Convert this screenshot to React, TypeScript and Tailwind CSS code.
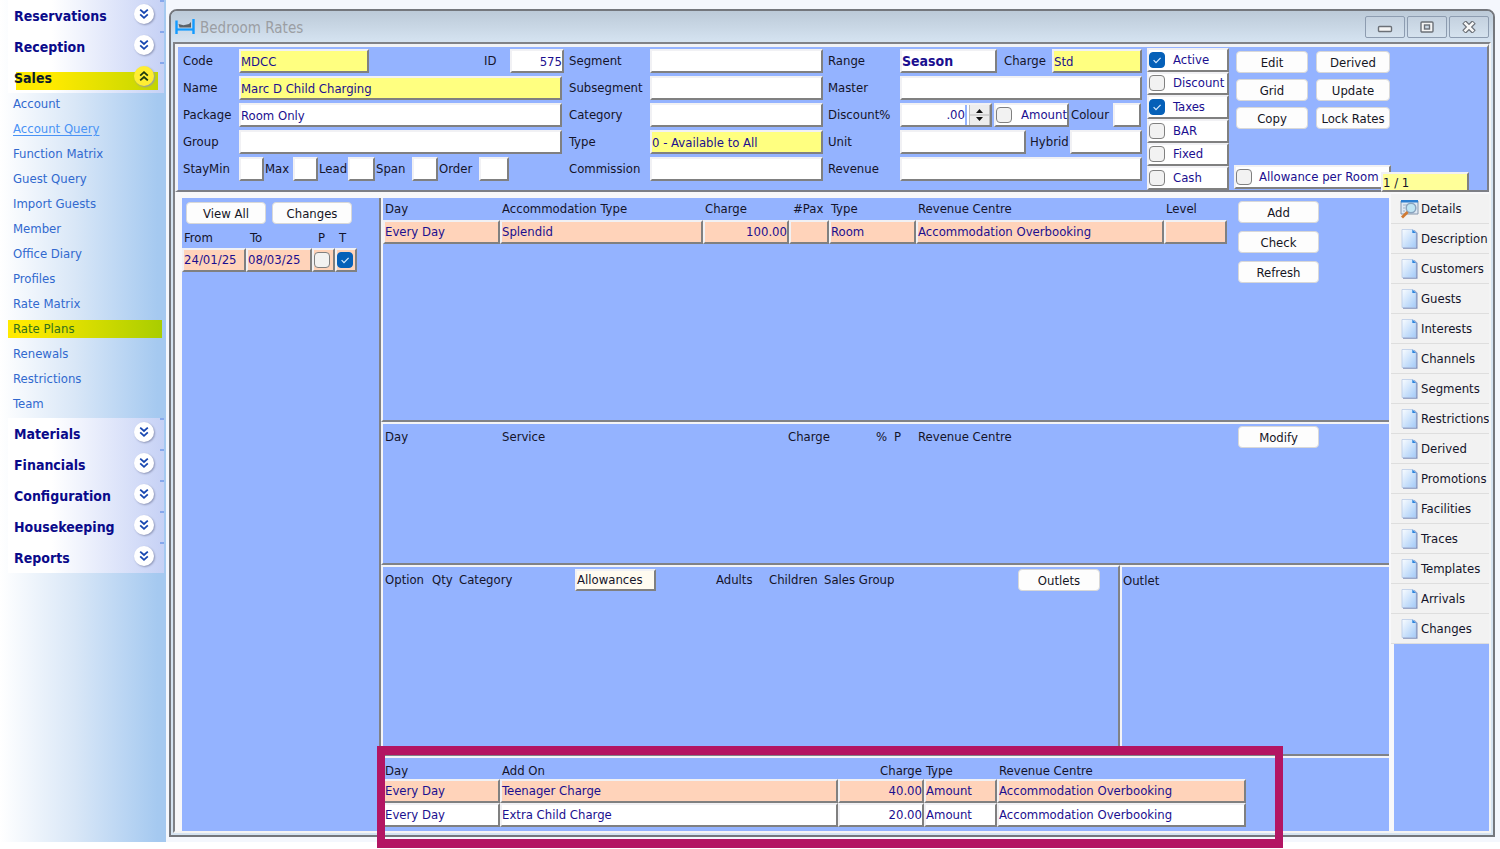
import type { ReactNode } from 'react';
import clsx from 'clsx';

const BEVEL =
  'border-t-2 border-l-2 border-r-2 border-b-2 border-t-[#f1f1f4] border-l-[#f1f1f4] border-r-[#808080] border-b-[#808080]';

const menuTop = ['Reservations', 'Reception'];
const menuBottom = ['Materials', 'Financials', 'Configuration', 'Housekeeping', 'Reports'];
const salesLinks = [
  'Account',
  'Account Query',
  'Function Matrix',
  'Guest Query',
  'Import Guests',
  'Member',
  'Office Diary',
  'Profiles',
  'Rate Matrix',
  'Rate Plans',
  'Renewals',
  'Restrictions',
  'Team',
];
const tabs = [
  'Details',
  'Description',
  'Customers',
  'Guests',
  'Interests',
  'Channels',
  'Segments',
  'Restrictions',
  'Derived',
  'Promotions',
  'Facilities',
  'Traces',
  'Templates',
  'Arrivals',
  'Changes',
];
const flags = [
  { label: 'Active', checked: true },
  { label: 'Discount', checked: false },
  { label: 'Taxes', checked: true },
  { label: 'BAR', checked: false },
  { label: 'Fixed', checked: false },
  { label: 'Cash', checked: false },
];
const addOns = [
  { day: 'Every Day', name: 'Teenager Charge', charge: '40.00', type: 'Amount', centre: 'Accommodation Overbooking' },
  { day: 'Every Day', name: 'Extra Child Charge', charge: '20.00', type: 'Amount', centre: 'Accommodation Overbooking' },
];

function Chevrons({ up = false }: { up?: boolean }) {
  return (
    <span
      className={clsx(
        'flex size-5 items-center justify-center rounded-full shadow-[1px_1px_2px_#8f97b8]',
        up ? 'bg-[#ffee33]' : 'bg-white',
      )}
    >
      <svg
        viewBox="0 0 12 12"
        className={clsx('size-3', up && 'rotate-180')}
        fill="none"
        stroke={up ? '#1c3a10' : '#1746b0'}
        strokeWidth="1.8"
      >
        <path d="M2.2 1.6 6 5l3.800-3.400M2.2 6.4 6 9.800l3.800-3.400" />
      </svg>
    </span>
  );
}

function MenuHeader({ label, open = false }: { label: string; open?: boolean }) {
  return (
    <button
      type="button"
      className="relative flex h-[31px] w-full items-center justify-between bg-linear-to-r from-white from-28% to-[#c6d1f5] pr-2.5 pl-1.5 text-left text-sm font-bold text-[#0a0a8a]"
    >
      {open && (
        <span className="absolute right-1.5 left-2 top-2.5 h-[18px] bg-linear-to-r from-[#ffea00] from-25% to-[#c3d600]" />
      )}
      <span className={clsx('relative', open && 'text-[#0b1a2c]')}>{label}</span>
      <span className="relative -mt-1">
        <Chevrons up={open} />
      </span>
      <span className="absolute top-0 right-0 h-0.5 w-1 bg-[#86a8ec]" />
    </button>
  );
}

function Sidebar() {
  return (
    <nav className="w-[166px] shrink-0 bg-linear-to-r from-white via-[#d9e7f7] via-45% to-[#a5c9f0] to-95% pr-0.5 pl-2">
      {menuTop.map((label) => (
        <MenuHeader key={label} label={label} />
      ))}
      <MenuHeader label="Sales" open />
      <ul>
        {salesLinks.map((label) => (
          <li key={label} className="flex h-[25px] items-start pt-0.5 pr-0.5">
            <a
              href="#"
              className={clsx(
                'block h-[18px] w-full pl-[5px] leading-[18px]',
                label === 'Account Query' && 'text-[#4a93f5] underline underline-offset-2',
                label === 'Rate Plans' && 'bg-linear-to-r from-[#ffea00] from-10% to-[#a9cd00] text-[#33701c]',
                label !== 'Account Query' && label !== 'Rate Plans' && 'text-[#3169cf]',
              )}
            >
              {label}
            </a>
          </li>
        ))}
      </ul>
      {menuBottom.map((label) => (
        <MenuHeader key={label} label={label} />
      ))}
    </nav>
  );
}

interface FieldProps {
  label: string;
  value?: string;
  labelClass: string;
  className: string;
  yellow?: boolean;
}

function Field({ label, value = '', labelClass, className, yellow = false }: FieldProps) {
  return (
    <label className="flex h-6 items-center">
      <span className={clsx('shrink-0 whitespace-nowrap', labelClass)}>{label}</span>
      <input
        type="text"
        defaultValue={value}
        className={clsx(
          'h-6 min-w-0 text-[#1b0f8f] outline-none',
          BEVEL,
          className,
          yellow ? 'bg-[#ffff80]' : 'bg-white',
        )}
      />
    </label>
  );
}

function Check({ checked = false, label }: { checked?: boolean; label?: string }) {
  return (
    <span className="relative flex size-4 shrink-0">
      <input
        type="checkbox"
        aria-label={label}
        defaultChecked={checked}
        className="peer size-4 appearance-none rounded-sm border border-[#808080] bg-[#f2f2f2] checked:border-[#0560b8] checked:bg-[#0560b8]"
      />
      <svg
        viewBox="0 0 16 16"
        className="pointer-events-none absolute inset-0 hidden size-4 peer-checked:block"
        fill="none"
        stroke="#d9ecff"
        strokeWidth="1.2"
      >
        <path d="m4.6 8.2 2.4 2.4 4.6-4.8" />
      </svg>
    </span>
  );
}

function PushButton({ children, className }: { children: ReactNode; className?: string }) {
  return (
    <button
      type="button"
      className={clsx(
        'flex h-[22px] items-center justify-center overflow-hidden rounded-sm border border-[#d8d8d8] bg-[#fdfdfd] pt-0.5 leading-4 whitespace-nowrap text-[#15151f]',
        className,
      )}
    >
      {children}
    </button>
  );
}

function Cell({ children, white = false, right = false }: { children?: ReactNode; white?: boolean; right?: boolean }) {
  return (
    <td
      className={clsx(
        'h-6 p-0 leading-5 text-[#1b0f8f]',
        BEVEL,
        white ? 'bg-white' : 'bg-[#ffd3ba]',
        right && 'text-right',
      )}
    >
      {children}
    </td>
  );
}

function BedIcon() {
  return (
    <svg viewBox="0 0 20 15" className="h-[15px] w-5">
      <path d="M1.500 1.500V15M18.500 0v15" stroke="#139bff" strokeWidth="2.400" />
      <path d="M1 10.500h18" stroke="#139bff" strokeWidth="2.200" />
      <path d="M3.500 5l5 1.200L14 5l2-2v5.500H4.500z" fill="#5b6268" />
    </svg>
  );
}

function PageIcon() {
  return (
    <svg viewBox="0 0 17 20" className="h-5 w-[17px]">
      <defs>
        <linearGradient id="sheet" x1="0" y1="0" x2="1" y2="1">
          <stop offset="0" stopColor="#fafdff" />
          <stop offset="1" stopColor="#a3caf8" />
        </linearGradient>
      </defs>
      <path d="M2 1h11.500L16.500 4v15.800H2z" fill="#7f8fba" />
      <path d="M1 .5h11l3 3v15H1z" fill="url(#sheet)" stroke="#b3c6e4" strokeWidth=".7" />
      <path d="M11.300.5v3.500h3.800z" fill="#2f86dd" />
    </svg>
  );
}

function DetailsIcon() {
  return (
    <svg viewBox="0 0 19 20" className="h-5 w-[19px]">
      <path d="M1 2h17v13H1z" fill="#dfe9f4" stroke="#8495ac" />
      <path d="M1 1h17v2.500H1z" fill="#2d7fd0" />
      <path d="M3 6h4M3 9h2M3 12h2" stroke="#9fb1c6" />
      <circle cx="11" cy="9" r="4.800" fill="#bfe4f3" stroke="#8aa3bd" strokeWidth="1.500" />
      <path d="M7.600 13 2 18.500" stroke="#d07a33" strokeWidth="2.800" />
    </svg>
  );
}

function TitleBar() {
  const frame =
    'flex h-[22px] w-10 items-center justify-center rounded-xs border border-[#8d9cb0] bg-linear-to-b from-[#c4d1df] to-[#d5e2ee]';
  return (
    <header className="flex h-[31px] items-center rounded-t-md bg-linear-to-b from-[#bccad8] to-[#d5e3f1] pr-1 pl-1">
      <BedIcon />
      <h1 className="ml-[5px] flex-1 pt-0.5 text-[15px] text-[#9b9ea3]">Bedroom Rates</h1>
      <div className="flex gap-0.5">
        <button type="button" aria-label="Minimise" className={frame}>
          <svg viewBox="0 0 16 12" className="h-3 w-4">
            <rect x="1.500" y="5.500" width="13" height="5" rx="1" fill="#f5f5f5" stroke="#6b7077" strokeWidth="1.400" />
          </svg>
        </button>
        <button type="button" aria-label="Restore" className={frame}>
          <svg viewBox="0 0 16 12" className="h-3 w-4" fill="#f5f5f5" stroke="#6b7077" strokeWidth="1.400">
            <rect x="2" y="1" width="12" height="10" rx="1" />
            <rect x="5.500" y="4" width="5" height="4" fill="#c9d6e3" />
          </svg>
        </button>
        <button type="button" aria-label="Close" className={frame}>
          <svg viewBox="0 0 16 12" className="h-3 w-4">
            <path d="m3 1 10 10m0-10-10 10" stroke="#6b7077" strokeWidth="5" />
            <path d="m3.600 1.600 8.800 8.800m0-8.800-8.800 8.800" stroke="#f7f7f7" strokeWidth="2.600" />
          </svg>
        </button>
      </div>
    </header>
  );
}

function RateForm() {
  return (
    <form className="flex min-h-[148px] gap-[5px] border-t-3 border-r-2 border-b-2 border-l-3 border-t-[#f1f2f6] border-r-[#7d7f86] border-b-[#7d7f86] border-l-[#f1f2f6] bg-[#94b3ff] pt-0.5 pl-[5px]">
      <div className="flex w-[381px] flex-col gap-[3px]">
        <div className="flex justify-between">
          <Field label="Code" value="MDCC" yellow labelClass="w-14" className="w-[130px]" />
          <Field label="ID" value="575" labelClass="w-[26px]" className="w-[54px] text-right" />
        </div>
        <Field label="Name" value="Marc D Child Charging" yellow labelClass="w-14" className="w-[323px]" />
        <Field label="Package" value="Room Only" labelClass="w-14" className="w-[323px]" />
        <Field label="Group" labelClass="w-14" className="w-[323px]" />
        <div className="flex gap-px">
          <Field label="StayMin" labelClass="w-14" className="w-[25px]" />
          <Field label="Max" labelClass="w-7" className="w-[25px]" />
          <Field label="Lead" labelClass="w-[29px]" className="w-[27px]" />
          <Field label="Span" labelClass="w-9" className="w-[26px]" />
          <Field label="Order" labelClass="w-10" className="w-[30px]" />
        </div>
      </div>

      <div className="flex w-[254px] flex-col gap-[3px]">
        <Field label="Segment" labelClass="w-[81px]" className="w-[173px]" />
        <Field label="Subsegment" labelClass="w-[81px]" className="w-[173px]" />
        <Field label="Category" labelClass="w-[81px]" className="w-[173px]" />
        <Field label="Type" value="0 - Available to All" yellow labelClass="w-[81px]" className="w-[173px]" />
        <Field label="Commission" labelClass="w-[81px]" className="w-[173px]" />
      </div>

      <div className="flex w-[314px] flex-col gap-[3px]">
        <div className="flex justify-between">
          <Field label="Range" value="Season" labelClass="w-[72px]" className="w-[97px] text-sm font-bold" />
          <Field label="Charge" value="Std" yellow labelClass="w-12" className="w-[90px]" />
        </div>
        <Field label="Master" labelClass="w-[72px]" className="w-[242px]" />
        <div className="flex gap-0.5">
          <div className="flex">
            <label htmlFor="discount" className="w-[72px] leading-6">
              Discount%
            </label>
            <div className={clsx('flex h-6 w-[92px] bg-white', BEVEL)}>
              <input
                id="discount"
                type="text"
                defaultValue=".00"
                className="w-[65px] border-r-2 border-[#94b3ff] text-right text-[#1b0f8f] outline-none"
              />
              <button type="button" aria-label="Step discount" className="ml-0.5 flex-1 border-x border-[#bcbcbc] bg-[#ededed]">
                <svg viewBox="0 0 19 18" className="h-[18px] w-full">
                  <path d="M0 9h19" stroke="#b5b5b5" />
                  <path d="M9.500 3 13 7H6zM9.500 15 6 11h7z" fill="#101010" />
                </svg>
              </button>
            </div>
          </div>
          <label className={clsx('flex h-6 w-[75px] items-center justify-between bg-white text-[#1b0f8f]', BEVEL)}>
            <Check />
            Amount
          </label>
          <Field label="Colour" labelClass="w-[42px]" className="w-7" />
        </div>
        <div className="flex justify-between">
          <Field label="Unit" labelClass="w-[72px]" className="w-[126px]" />
          <Field label="Hybrid" labelClass="w-10" className="w-[72px]" />
        </div>
        <Field label="Revenue" labelClass="w-[72px]" className="w-[242px]" />
      </div>

      <div className="-mt-px grid w-[82px] grid-rows-6">
        {flags.map((flag) => (
          <label key={flag.label} className={clsx('flex items-center gap-2 bg-white text-[#1b0f8f]', BEVEL)}>
            <Check checked={flag.checked} />
            {flag.label}
          </label>
        ))}
      </div>

      <div className="flex flex-col justify-between pb-px">
        <div className="mt-0.5 ml-0.5 grid grid-cols-[72px_74px] gap-x-2 gap-y-1.5">
          {['Edit', 'Derived', 'Grid', 'Update', 'Copy', 'Lock Rates'].map((label) => (
            <PushButton key={label}>{label}</PushButton>
          ))}
        </div>
        <label className={clsx('flex h-6 w-[157px] items-center gap-[7px] bg-white whitespace-nowrap text-[#1b0f8f]', BEVEL)}>
          <Check />
          Allowance per Room
        </label>
      </div>
    </form>
  );
}

function DatePanel() {
  return (
    <aside className="w-[197px] shrink-0 bg-[#94b3ff]">
      <div className="flex gap-1.5 px-1 pt-1">
        <PushButton className="w-20">View All</PushButton>
        <PushButton className="w-20">Changes</PushButton>
      </div>
      <table className="mt-1 w-[175px] table-fixed border-separate border-spacing-0 text-left">
        <colgroup>
          <col className="w-[64px]" />
          <col className="w-[66px]" />
          <col className="w-[23px]" />
          <col className="w-[22px]" />
        </colgroup>
        <thead>
          <tr className="h-5">
            <th className="pl-0.5 font-normal">From</th>
            <th className="pl-1 font-normal">To</th>
            <th className="pl-1.5 font-normal">P</th>
            <th className="pl-1 font-normal">T</th>
          </tr>
        </thead>
        <tbody>
          <tr>
            <Cell>24/01/25</Cell>
            <Cell>08/03/25</Cell>
            <Cell>
              <Check label="P" />
            </Cell>
            <Cell>
              <Check label="T" checked />
            </Cell>
          </tr>
        </tbody>
      </table>
    </aside>
  );
}

const LEFT_EDGE = 'border-l-2 border-l-[#f4f4f6]';
const TOP_EDGE = 'border-t-2 border-t-[#f4f4f6]';

function AccommodationSection() {
  return (
    <section className={clsx('flex min-h-[224px] gap-[11px]', LEFT_EDGE)}>
      <table className="h-fit w-[844px] table-fixed border-separate border-spacing-0 text-left">
        <colgroup>
          <col className="w-[117px]" />
          <col className="w-[203px]" />
          <col className="w-[86px]" />
          <col className="w-[40px]" />
          <col className="w-[87px]" />
          <col className="w-[248px]" />
          <col className="w-[63px]" />
        </colgroup>
        <thead>
          <tr className="h-[22px]">
            <th className="pl-0.5 font-normal">Day</th>
            <th className="pl-0.5 font-normal">Accommodation Type</th>
            <th className="pl-0.5 font-normal">Charge</th>
            <th className="pl-1 font-normal">#Pax</th>
            <th className="pl-0.5 font-normal">Type</th>
            <th className="pl-0.5 font-normal">Revenue Centre</th>
            <th className="pl-0.5 font-normal">Level</th>
          </tr>
        </thead>
        <tbody>
          <tr>
            <Cell>Every Day</Cell>
            <Cell>Splendid</Cell>
            <Cell right>100.00</Cell>
            <Cell />
            <Cell>Room</Cell>
            <Cell>Accommodation Overbooking</Cell>
            <Cell />
          </tr>
        </tbody>
      </table>
      <div className="flex flex-col gap-2 pt-[3px]">
        <PushButton className="w-[81px]">Add</PushButton>
        <PushButton className="w-[81px]">Check</PushButton>
        <PushButton className="w-[81px]">Refresh</PushButton>
      </div>
    </section>
  );
}

function ServiceSection() {
  return (
    <section className={clsx('flex min-h-[143px] gap-[11px]', LEFT_EDGE, TOP_EDGE)}>
      <table className="h-fit w-[844px] table-fixed text-left">
        <colgroup>
          <col className="w-[117px]" />
          <col className="w-[286px]" />
          <col className="w-[88px]" />
          <col className="w-[18px]" />
          <col className="w-[24px]" />
          <col />
        </colgroup>
        <thead>
          <tr className="h-[26px]">
            <th className="pl-0.5 font-normal">Day</th>
            <th className="pl-0.5 font-normal">Service</th>
            <th className="pl-0.5 font-normal">Charge</th>
            <th className="pl-0.5 font-normal">%</th>
            <th className="pl-0.5 font-normal">P</th>
            <th className="pl-0.5 font-normal">Revenue Centre</th>
          </tr>
        </thead>
      </table>
      <div className="pt-0.5">
        <PushButton className="w-[81px]">Modify</PushButton>
      </div>
    </section>
  );
}

function OptionSection() {
  return (
    <div className="flex min-h-[191px]">
      <section className={clsx('w-[739px] border-r-2 border-r-[#808287] pl-0.5', LEFT_EDGE, TOP_EDGE)}>
        <div className="flex h-[26px] items-center">
          <span className="w-[47px]">Option</span>
          <span className="w-[27px]">Qty</span>
          <span className="w-[116px]">Category</span>
          <button type="button" className={clsx('h-[22px] w-[81px] bg-[#fffbf0] text-left leading-[18px]', BEVEL)}>
            Allowances
          </button>
          <span className="ml-[60px] w-[53px]">Adults</span>
          <span className="w-[55px]">Children</span>
          <span className="w-[194px]">Sales Group</span>
          <PushButton className="w-[82px]">Outlets</PushButton>
        </div>
      </section>
      <section className={clsx('flex-1', LEFT_EDGE, TOP_EDGE)}>
        <span className="block pl-px leading-7">Outlet</span>
      </section>
    </div>
  );
}

function AddOnSection() {
  return (
    <section className={clsx('relative flex-1', LEFT_EDGE, TOP_EDGE)}>
      <table className="mt-1 w-[863px] table-fixed border-separate border-spacing-0 text-left">
        <colgroup>
          <col className="w-[117px]" />
          <col className="w-[338px]" />
          <col className="w-[86px]" />
          <col className="w-[73px]" />
          <col className="w-[249px]" />
        </colgroup>
        <thead>
          <tr className="h-[17px] leading-[17px]">
            <th className="p-0 pl-0.5 font-normal">Day</th>
            <th className="p-0 pl-0.5 font-normal">Add On</th>
            <th className="p-0 pr-0.5 text-right font-normal">Charge</th>
            <th className="p-0 pl-0.5 font-normal">Type</th>
            <th className="p-0 pl-0.5 font-normal">Revenue Centre</th>
          </tr>
        </thead>
        <tbody>
          {addOns.map((row, i) => (
            <tr key={row.name}>
              <Cell white={i > 0}>{row.day}</Cell>
              <Cell white={i > 0}>{row.name}</Cell>
              <Cell white={i > 0} right>
                {row.charge}
              </Cell>
              <Cell white={i > 0}>{row.type}</Cell>
              <Cell white={i > 0}>{row.centre}</Cell>
            </tr>
          ))}
        </tbody>
      </table>
      {/* highlight frame around the add-on charges */}
      <div className="pointer-events-none absolute -top-3 -left-1.5 h-[102px] w-[906px] border-x-8 border-y-9 border-[#b31563]" />
    </section>
  );
}

function TabStrip() {
  return (
    <nav className="mt-0.5 flex w-[98px] shrink-0 flex-col">
      {tabs.map((label) => (
        <button
          key={label}
          type="button"
          className="flex h-[30px] items-center overflow-hidden border-b border-[#dedede] bg-[#f2f2f2] pl-2 text-left whitespace-nowrap"
        >
          <span className="mr-0.5 flex w-5 shrink-0 justify-center">{label === 'Details' ? <DetailsIcon /> : <PageIcon />}</span>
          {label}
        </button>
      ))}
      <div className="ml-[3px] flex-1 bg-[#94b3ff]" />
    </nav>
  );
}

export default function App() {
  return (
    <div className="flex min-h-screen flex-col bg-white font-['DejaVu_Sans_Condensed','Noto_Sans',sans-serif] text-[13px] leading-[18px] text-[#14142a]">
      <div className="mb-[7px] flex flex-1 bg-[#f4f7fd]">
        <Sidebar />
        <main className="mt-[9px] mr-[5px] mb-[5px] ml-[3px] flex min-w-0 flex-1 flex-col rounded-t-lg border-2 border-[#74777d] bg-[#d5e3f1]">
          <TitleBar />
          <div className="mx-0.5 mb-0.5 flex flex-1 flex-col border-2 border-[#808287] border-r-[#f4f4f4] border-b-[#f4f4f4] bg-[#f8f8fa]">
            <RateForm />
            <div className="relative flex flex-1">
              <div className="flex min-w-0 flex-1 pt-1.5 pl-[7px]">
                <DatePanel />
                <div className="mr-0.5 flex min-w-0 flex-1 flex-col divide-y-2 divide-[#808287] border-l-2 border-[#808287] bg-[#94b3ff]">
                  <AccommodationSection />
                  <ServiceSection />
                  <OptionSection />
                  <AddOnSection />
                </div>
              </div>
              <TabStrip />
              <input
                type="text"
                aria-label="Record"
                defaultValue="1 / 1"
                className={clsx('absolute -top-5 right-5 h-5 w-[88px] bg-[#ffff99] outline-none', BEVEL)}
              />
            </div>
          </div>
        </main>
      </div>
    </div>
  );
}
